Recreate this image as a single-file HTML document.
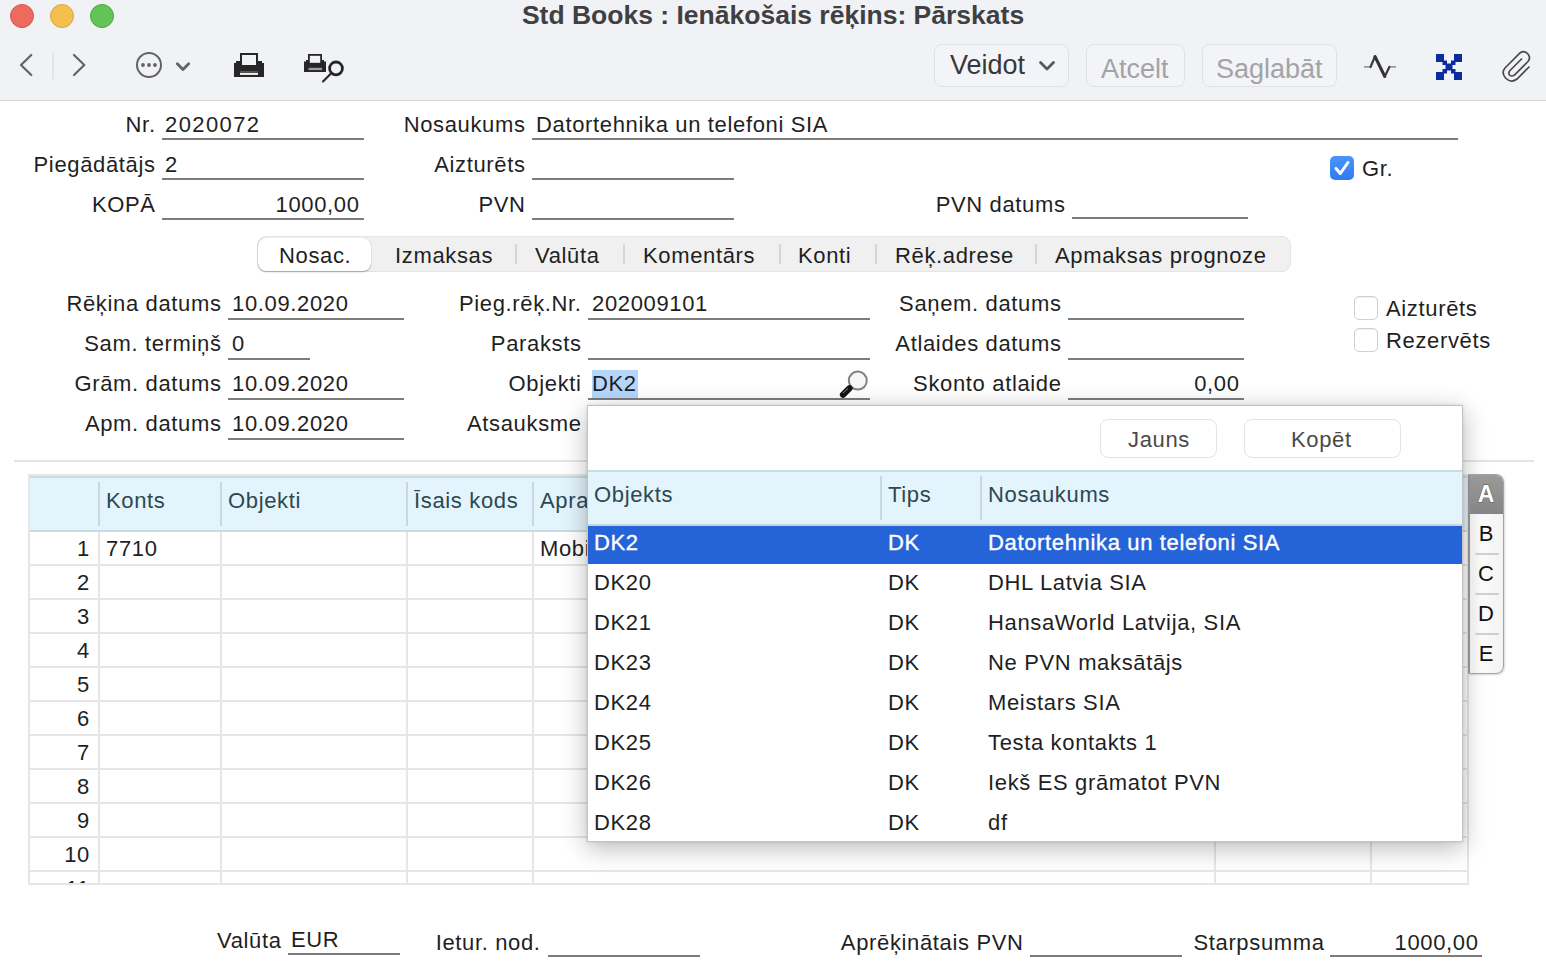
<!DOCTYPE html>
<html><head><meta charset="utf-8">
<style>
*{box-sizing:border-box}
html,body{margin:0;padding:0}
body{width:1546px;height:966px;overflow:hidden;position:relative;background:#fff;font-family:"Liberation Sans",sans-serif;color:#1f1f1f}
.a{position:absolute}
.t{position:absolute;font-size:22px;letter-spacing:0.65px;line-height:32px;white-space:nowrap}
.r{margin-right:-0.65px}
.r{text-align:right}
.ul{position:absolute;height:2px;background:#7c7c7c}
#bar{position:absolute;left:0;top:0;width:1546px;height:101px;background:#f1f2f6;border-bottom:1px solid #d9d9dc}
.tl{position:absolute;top:4px;width:24px;height:24px;border-radius:50%}
.btn{position:absolute;top:44px;height:43px;border:1.5px solid #e1e1e4;border-radius:8px;background:#f3f4f7}
.bt{position:absolute;font-size:27px;line-height:30px;white-space:nowrap}
</style></head><body>

<div id="bar">
  <div class="tl" style="left:10px;background:#ed6a5e;border:1px solid #d8554a"></div>
  <div class="tl" style="left:50px;background:#f5bf4f;border:1px solid #d9a53c"></div>
  <div class="tl" style="left:90px;background:#61c454;border:1px solid #4aa83e"></div>
  <div class="a" style="left:0;top:0;width:1546px;text-align:center;font-weight:bold;font-size:26.5px;line-height:30px;color:#404043">Std Books : Ienākošais rēķins: Pārskats</div>
  <svg class="a" style="left:0;top:0" width="400" height="100" viewBox="0 0 400 100">
    <g fill="none" stroke="#636366" stroke-width="2.2" stroke-linecap="round" stroke-linejoin="round">
      <polyline points="31.3,55 21,65 31.3,75"/>
      <polyline points="74,55 84.3,65 74,75"/>
      <circle cx="149" cy="65" r="12" stroke-width="2"/>
      <polyline points="177.3,63.8 183,69.6 188.7,63.8" stroke-width="2.8"/>
    </g>
    <line x1="53" y1="52.5" x2="53" y2="79.5" stroke="#dfdfe2" stroke-width="1.5"/>
    <g fill="#636366"><circle cx="143" cy="65" r="1.9"/><circle cx="149" cy="65" r="1.9"/><circle cx="155" cy="65" r="1.9"/></g>
    <!-- printer -->
    <rect x="240" y="53" width="18" height="13" fill="#262626"/>
    <rect x="242" y="55" width="14" height="10" fill="#f1f2f6"/>
    <path d="M236,61 h4 v4 h18 v-4 h4 v2 h2 v14 h-30 v-14 h2z" fill="#262626"/>
    <rect x="240" y="72.8" width="18" height="2.1" fill="#f1f2f6"/>
    <rect x="240" y="71" width="18" height="1" fill="#555"/>
    <!-- print preview -->
    <rect x="308" y="54" width="14" height="9.5" fill="#262626"/>
    <rect x="309.8" y="55.8" width="10.4" height="7" fill="#f1f2f6"/>
    <path d="M306,60 h2 v3 h14 v-3 h2 v1.5 h2 v10.5 h-22 v-10.5 h2z" fill="#262626"/>
    <rect x="308.5" y="67.8" width="13.5" height="2.3" fill="#9a9a9c"/>
    <circle cx="336" cy="68.4" r="6.4" fill="none" stroke="#262626" stroke-width="2.8"/>
    <line x1="331" y1="73.5" x2="323" y2="81.5" stroke="#262626" stroke-width="2.1" stroke-linecap="round"/>
  </svg>
  <div class="btn" style="left:934px;width:135px"></div>
  <div class="bt" style="left:950px;top:50px;color:#38383a">Veidot</div>
  <svg class="a" style="left:1036px;top:58px" width="22" height="16"><polyline points="4.5,4.5 11,11 17.5,4.5" fill="none" stroke="#58585c" stroke-width="2.8" stroke-linecap="round" stroke-linejoin="round"/></svg>
  <div class="btn" style="left:1086px;width:99px"></div>
  <div class="bt" style="left:1101px;top:54px;color:#a3a3a6">Atcelt</div>
  <div class="btn" style="left:1202px;width:135px"></div>
  <div class="bt" style="left:1216px;top:54px;color:#a3a3a6">Saglabāt</div>
  <svg class="a" style="left:1350px;top:40px" width="196" height="56" viewBox="1350 40 196 56">
    <polyline points="1364,66.9 1371,66.9" stroke="#8a8a8c" stroke-width="1.5" fill="none"/>
    <polyline points="1389.4,66.9 1396,66.9" stroke="#8a8a8c" stroke-width="1.5" fill="none"/>
    <polyline points="1370.5,67 1375,56.5" stroke="#3a3a3c" stroke-width="2.2" fill="none" stroke-linecap="round"/>
    <polyline points="1375,56.5 1384.8,76.5" stroke="#333335" stroke-width="3" fill="none" stroke-linecap="round"/>
    <polyline points="1384.8,76.5 1389.4,67" stroke="#3a3a3c" stroke-width="2.2" fill="none" stroke-linecap="round"/>
    <g fill="#0b2ba0">
      <rect x="1436" y="54" width="8" height="8"/><rect x="1454" y="54" width="8" height="8"/>
      <rect x="1436" y="72" width="8" height="8"/><rect x="1454" y="72" width="8" height="8"/>
      <rect x="1445.5" y="63.5" width="7" height="7"/>
      <rect x="1442.5" y="60.5" width="4.5" height="4.5"/><rect x="1451" y="60.5" width="4.5" height="4.5"/>
      <rect x="1442.5" y="69" width="4.5" height="4.5"/><rect x="1451" y="69" width="4.5" height="4.5"/>
    </g>
    <path d="M1529,67 L1517,79 Q1511,83.5 1505.5,78 Q1501,72.5 1505,68 L1520,53 Q1524,50 1528,54 Q1531,58 1528,61.5 L1514.5,75 Q1511.5,77 1509.5,75 Q1508,72.5 1510,70.5 L1521.5,59" fill="none" stroke="#4a4a4c" stroke-width="1.7" stroke-linecap="round"/>
  </svg>
</div>


<!-- form block 1 -->
<div class="t r" style="right:1391px;top:109px">Nr.</div>
<div class="t" style="left:165px;top:109px;letter-spacing:1.4px">2020072</div>
<div class="ul" style="left:162px;top:138px;width:202px"></div>
<div class="t r" style="right:1391px;top:149px">Piegādātājs</div>
<div class="t" style="left:165px;top:149px">2</div>
<div class="ul" style="left:162px;top:178px;width:202px"></div>
<div class="t r" style="right:1391px;top:189px">KOPĀ</div>
<div class="t r" style="right:1187px;top:189px">1000,00</div>
<div class="ul" style="left:162px;top:218px;width:202px"></div>

<div class="t r" style="right:1021px;top:109px">Nosaukums</div>
<div class="t" style="left:536px;top:109px">Datortehnika un telefoni SIA</div>
<div class="ul" style="left:532px;top:138px;width:926px"></div>
<div class="t r" style="right:1021px;top:149px">Aizturēts</div>
<div class="ul" style="left:532px;top:178px;width:202px"></div>
<div class="t r" style="right:1021px;top:189px">PVN</div>
<div class="ul" style="left:532px;top:218px;width:202px"></div>

<div class="a" style="left:1330px;top:156px;width:24px;height:24px;border-radius:5px;background:linear-gradient(#4a95fb,#2f7bf2)"></div>
<svg class="a" style="left:1330px;top:156px" width="24" height="24"><polyline points="6,12.5 10.3,17.5 18,6.5" fill="none" stroke="#fff" stroke-width="3" stroke-linecap="round" stroke-linejoin="round"/></svg>
<div class="t" style="left:1362px;top:153px">Gr.</div>
<div class="t r" style="right:481px;top:189px">PVN datums</div>
<div class="ul" style="left:1072px;top:217px;width:176px"></div>

<!-- tabs -->
<div class="a" style="left:257px;top:236px;width:1034px;height:36px;border-radius:9px;background:#f0f0f0;border:1px solid #e4e4e4"></div>
<div class="a" style="left:258px;top:237.5px;width:113px;height:33px;border-radius:8px;background:#fff;box-shadow:0 1px 1.5px rgba(0,0,0,0.3),0 0 0.5px rgba(0,0,0,0.3)"></div>
<div class="t" style="left:279px;top:240px">Nosac.</div>
<div class="t" style="left:395px;top:240px">Izmaksas</div>
<div class="a" style="left:515px;top:244px;width:2px;height:20px;background:#d6d6d6"></div>
<div class="t" style="left:535px;top:240px">Valūta</div>
<div class="a" style="left:623px;top:244px;width:2px;height:20px;background:#d6d6d6"></div>
<div class="t" style="left:643px;top:240px">Komentārs</div>
<div class="a" style="left:779px;top:244px;width:2px;height:20px;background:#d6d6d6"></div>
<div class="t" style="left:798px;top:240px">Konti</div>
<div class="a" style="left:875px;top:244px;width:2px;height:20px;background:#d6d6d6"></div>
<div class="t" style="left:895px;top:240px">Rēķ.adrese</div>
<div class="a" style="left:1035px;top:244px;width:2px;height:20px;background:#d6d6d6"></div>
<div class="t" style="left:1055px;top:240px">Apmaksas prognoze</div>

<!-- form block 2 -->
<div class="t r" style="right:1325px;top:288px">Rēķina datums</div>
<div class="t" style="left:232px;top:288px">10.09.2020</div>
<div class="ul" style="left:228px;top:318px;width:176px"></div>
<div class="t r" style="right:1325px;top:328px">Sam. termiņš</div>
<div class="t" style="left:232px;top:328px">0</div>
<div class="ul" style="left:228px;top:358px;width:82px"></div>
<div class="t r" style="right:1325px;top:368px">Grām. datums</div>
<div class="t" style="left:232px;top:368px">10.09.2020</div>
<div class="ul" style="left:228px;top:398px;width:176px"></div>
<div class="t r" style="right:1325px;top:408px">Apm. datums</div>
<div class="t" style="left:232px;top:408px">10.09.2020</div>
<div class="ul" style="left:228px;top:438px;width:176px"></div>

<div class="t r" style="right:965px;top:288px">Pieg.rēķ.Nr.</div>
<div class="t" style="left:592px;top:288px">202009101</div>
<div class="ul" style="left:588px;top:318px;width:282px"></div>
<div class="t r" style="right:965px;top:328px">Paraksts</div>
<div class="ul" style="left:588px;top:358px;width:282px"></div>
<div class="t r" style="right:965px;top:368px">Objekti</div>
<div class="a" style="left:592px;top:370px;width:46px;height:28px;background:#b4d6fd"></div>
<div class="t" style="left:592px;top:368px">DK2</div>
<div class="ul" style="left:588px;top:398px;width:282px"></div>
<svg class="a" style="left:830px;top:364px" width="46" height="40" viewBox="830 364 46 40">
  <circle cx="857.8" cy="380.6" r="9" fill="#f6f6f6" stroke="#808080" stroke-width="2"/>
  <line x1="843" y1="394.8" x2="849.5" y2="388.3" stroke="#151515" stroke-width="6.2" stroke-linecap="round"/>
  <line x1="843" y1="393" x2="848" y2="388.5" stroke="#8a8a8a" stroke-width="1"/>
</svg>
<div class="t r" style="right:965px;top:408px">Atsauksme</div>

<div class="t r" style="right:485px;top:288px">Saņem. datums</div>
<div class="ul" style="left:1068px;top:318px;width:176px"></div>
<div class="t r" style="right:485px;top:328px">Atlaides datums</div>
<div class="ul" style="left:1068px;top:358px;width:176px"></div>
<div class="t r" style="right:485px;top:368px">Skonto atlaide</div>
<div class="t r" style="right:307px;top:368px">0,00</div>
<div class="ul" style="left:1068px;top:398px;width:176px"></div>

<div class="a" style="left:1354px;top:296px;width:24px;height:24px;border-radius:5px;background:#fff;border:1px solid #cfcfcf;box-shadow:inset 0 1px 1px rgba(0,0,0,0.06)"></div>
<div class="t" style="left:1386px;top:293px">Aizturēts</div>
<div class="a" style="left:1354px;top:328px;width:24px;height:24px;border-radius:5px;background:#fff;border:1px solid #cfcfcf;box-shadow:inset 0 1px 1px rgba(0,0,0,0.06)"></div>
<div class="t" style="left:1386px;top:325px">Rezervēts</div>

<div class="a" style="left:14px;top:460px;width:1520px;height:2px;background:#e4e4e4"></div>

<!-- table -->
<div class="a" style="left:28px;top:474px;width:1441px;height:411px;border:2px solid #e6e6e6;background:#fff;overflow:hidden">
<div class="a" style="left:0;top:0;width:1437px;height:56px;background:#e3f4fc;border-top:2px solid #c9dbe3;border-bottom:2px solid #c9dbe3"></div>
<div class="a" style="left:68px;top:6px;width:2px;height:44px;background:#c6d9e1"></div>
<div class="a" style="left:68px;top:56px;width:2px;height:360px;background:#e6e6e6"></div>
<div class="a" style="left:190px;top:6px;width:2px;height:44px;background:#c6d9e1"></div>
<div class="a" style="left:190px;top:56px;width:2px;height:360px;background:#e6e6e6"></div>
<div class="a" style="left:376px;top:6px;width:2px;height:44px;background:#c6d9e1"></div>
<div class="a" style="left:376px;top:56px;width:2px;height:360px;background:#e6e6e6"></div>
<div class="a" style="left:502px;top:6px;width:2px;height:44px;background:#c6d9e1"></div>
<div class="a" style="left:502px;top:56px;width:2px;height:360px;background:#e6e6e6"></div>
<div class="a" style="left:1184px;top:6px;width:2px;height:44px;background:#c6d9e1"></div>
<div class="a" style="left:1184px;top:56px;width:2px;height:360px;background:#e6e6e6"></div>
<div class="a" style="left:1340px;top:6px;width:2px;height:44px;background:#c6d9e1"></div>
<div class="a" style="left:1340px;top:56px;width:2px;height:360px;background:#e6e6e6"></div>
<div class="a" style="left:0;top:88px;width:1437px;height:2px;background:#e6e6e6"></div>
<div class="a" style="left:0;top:122px;width:1437px;height:2px;background:#e6e6e6"></div>
<div class="a" style="left:0;top:156px;width:1437px;height:2px;background:#e6e6e6"></div>
<div class="a" style="left:0;top:190px;width:1437px;height:2px;background:#e6e6e6"></div>
<div class="a" style="left:0;top:224px;width:1437px;height:2px;background:#e6e6e6"></div>
<div class="a" style="left:0;top:258px;width:1437px;height:2px;background:#e6e6e6"></div>
<div class="a" style="left:0;top:292px;width:1437px;height:2px;background:#e6e6e6"></div>
<div class="a" style="left:0;top:326px;width:1437px;height:2px;background:#e6e6e6"></div>
<div class="a" style="left:0;top:360px;width:1437px;height:2px;background:#e6e6e6"></div>
<div class="a" style="left:0;top:394px;width:1437px;height:2px;background:#e6e6e6"></div>
<div class="t" style="left:76px;top:9px;color:#2c4852">Konts</div>
<div class="t" style="left:198px;top:9px;color:#2c4852">Objekti</div>
<div class="t" style="left:384px;top:9px;color:#2c4852">Īsais kods</div>
<div class="t" style="left:510px;top:9px;color:#2c4852">Apraksts</div>
<div class="t r" style="left:0px;width:60px;top:57px">1</div>
<div class="t r" style="left:0px;width:60px;top:91px">2</div>
<div class="t r" style="left:0px;width:60px;top:125px">3</div>
<div class="t r" style="left:0px;width:60px;top:159px">4</div>
<div class="t r" style="left:0px;width:60px;top:193px">5</div>
<div class="t r" style="left:0px;width:60px;top:227px">6</div>
<div class="t r" style="left:0px;width:60px;top:261px">7</div>
<div class="t r" style="left:0px;width:60px;top:295px">8</div>
<div class="t r" style="left:0px;width:60px;top:329px">9</div>
<div class="t r" style="left:0px;width:60px;top:363px">10</div>
<div class="t r" style="left:0px;width:60px;top:397px">11</div>
<div class="t" style="left:76px;top:57px">7710</div>
<div class="t" style="left:510px;top:57px">Mobilais telefons</div>
</div>
<!-- popup -->
<div class="a" style="left:587px;top:405px;width:876px;height:437px;background:#fff;border:1px solid #c4c4c4;box-shadow:0 6px 24px rgba(0,0,0,0.28),0 0 3px rgba(0,0,0,0.12);overflow:hidden">
<div class="a" style="left:512px;top:13px;width:117px;height:39px;border:1.5px solid #e3e3e3;border-radius:8px"></div>
<div class="t" style="left:540px;top:18px;color:#4a4a4a">Jauns</div>
<div class="a" style="left:656px;top:13px;width:157px;height:39px;border:1.5px solid #e3e3e3;border-radius:8px"></div>
<div class="t" style="left:703px;top:18px;color:#4a4a4a">Kopēt</div>
<div class="a" style="left:0;top:64px;width:874px;height:56px;background:#e3f4fc;border-top:2px solid #c9dbe3;border-bottom:2px solid #c6d6dc"></div>
<div class="a" style="left:292px;top:70px;width:2px;height:44px;background:#c6d9e1"></div>
<div class="a" style="left:392px;top:70px;width:2px;height:44px;background:#c6d9e1"></div>
<div class="t" style="left:6px;top:73px;color:#2c4852">Objekts</div>
<div class="t" style="left:300px;top:73px;color:#2c4852">Tips</div>
<div class="t" style="left:400px;top:73px;color:#2c4852">Nosaukums</div>
<div class="a" style="left:0;top:120px;width:874px;height:38px;background:#2563d9"></div>
<div class="t" style="left:6px;top:121px;color:#fff;-webkit-text-stroke:0.35px #fff;">DK2</div>
<div class="t" style="left:300px;top:121px;color:#fff;-webkit-text-stroke:0.35px #fff;">DK</div>
<div class="t" style="left:400px;top:121px;color:#fff;-webkit-text-stroke:0.35px #fff;">Datortehnika un telefoni SIA</div>
<div class="t" style="left:6px;top:161px;">DK20</div>
<div class="t" style="left:300px;top:161px;">DK</div>
<div class="t" style="left:400px;top:161px;">DHL Latvia SIA</div>
<div class="t" style="left:6px;top:201px;">DK21</div>
<div class="t" style="left:300px;top:201px;">DK</div>
<div class="t" style="left:400px;top:201px;">HansaWorld Latvija, SIA</div>
<div class="t" style="left:6px;top:241px;">DK23</div>
<div class="t" style="left:300px;top:241px;">DK</div>
<div class="t" style="left:400px;top:241px;">Ne PVN maksātājs</div>
<div class="t" style="left:6px;top:281px;">DK24</div>
<div class="t" style="left:300px;top:281px;">DK</div>
<div class="t" style="left:400px;top:281px;">Meistars SIA</div>
<div class="t" style="left:6px;top:321px;">DK25</div>
<div class="t" style="left:300px;top:321px;">DK</div>
<div class="t" style="left:400px;top:321px;">Testa kontakts 1</div>
<div class="t" style="left:6px;top:361px;">DK26</div>
<div class="t" style="left:300px;top:361px;">DK</div>
<div class="t" style="left:400px;top:361px;">Iekš ES grāmatot PVN</div>
<div class="t" style="left:6px;top:401px;">DK28</div>
<div class="t" style="left:300px;top:401px;">DK</div>
<div class="t" style="left:400px;top:401px;">df</div>
</div>
<!-- index -->
<div class="a" style="left:1468px;top:474px;width:36px;height:200px;border:1.5px solid #a3a3a3;border-left:2px solid #8e8e8e;border-radius:0 8px 8px 0;background:linear-gradient(90deg,#e9e9e9,#fafafa 35%,#f3f3f3);box-shadow:1px 1px 2px rgba(0,0,0,0.15);overflow:hidden">
<div class="a" style="left:0;top:0;width:34px;height:39px;background:linear-gradient(#9a9a9a,#858585)"></div>
<div class="a" style="left:0;top:4px;width:32px;text-align:center;font-size:23px;line-height:30px;color:#fff;font-weight:bold;-webkit-text-stroke:1px #5a5a5a;paint-order:stroke fill">A</div>
<div class="a" style="left:0;top:44px;width:32px;text-align:center;font-size:22px;line-height:30px;color:#111">B</div>
<div class="a" style="left:0;top:84px;width:32px;text-align:center;font-size:22px;line-height:30px;color:#111">C</div>
<div class="a" style="left:0;top:124px;width:32px;text-align:center;font-size:22px;line-height:30px;color:#111">D</div>
<div class="a" style="left:0;top:164px;width:32px;text-align:center;font-size:22px;line-height:30px;color:#111">E</div>
<div class="a" style="left:5px;top:78px;width:24px;height:1.5px;background:#cfcfcf"></div>
<div class="a" style="left:5px;top:118px;width:24px;height:1.5px;background:#cfcfcf"></div>
<div class="a" style="left:5px;top:158px;width:24px;height:1.5px;background:#cfcfcf"></div>
</div>
<!-- bottom -->
<div class="t r" style="right:1265px;top:925px">Valūta</div>
<div class="t" style="left:291px;top:924px">EUR</div>
<div class="ul" style="left:288px;top:953px;width:112px"></div>
<div class="t r" style="right:1006px;top:927px">Ietur. nod.</div>
<div class="ul" style="left:548px;top:955px;width:152px"></div>
<div class="t r" style="right:523px;top:927px">Aprēķinātais PVN</div>
<div class="ul" style="left:1030px;top:955px;width:152px"></div>
<div class="t r" style="right:222px;top:927px">Starpsumma</div>
<div class="t r" style="right:68px;top:927px">1000,00</div>
<div class="ul" style="left:1330px;top:955px;width:152px"></div>
</body></html>
